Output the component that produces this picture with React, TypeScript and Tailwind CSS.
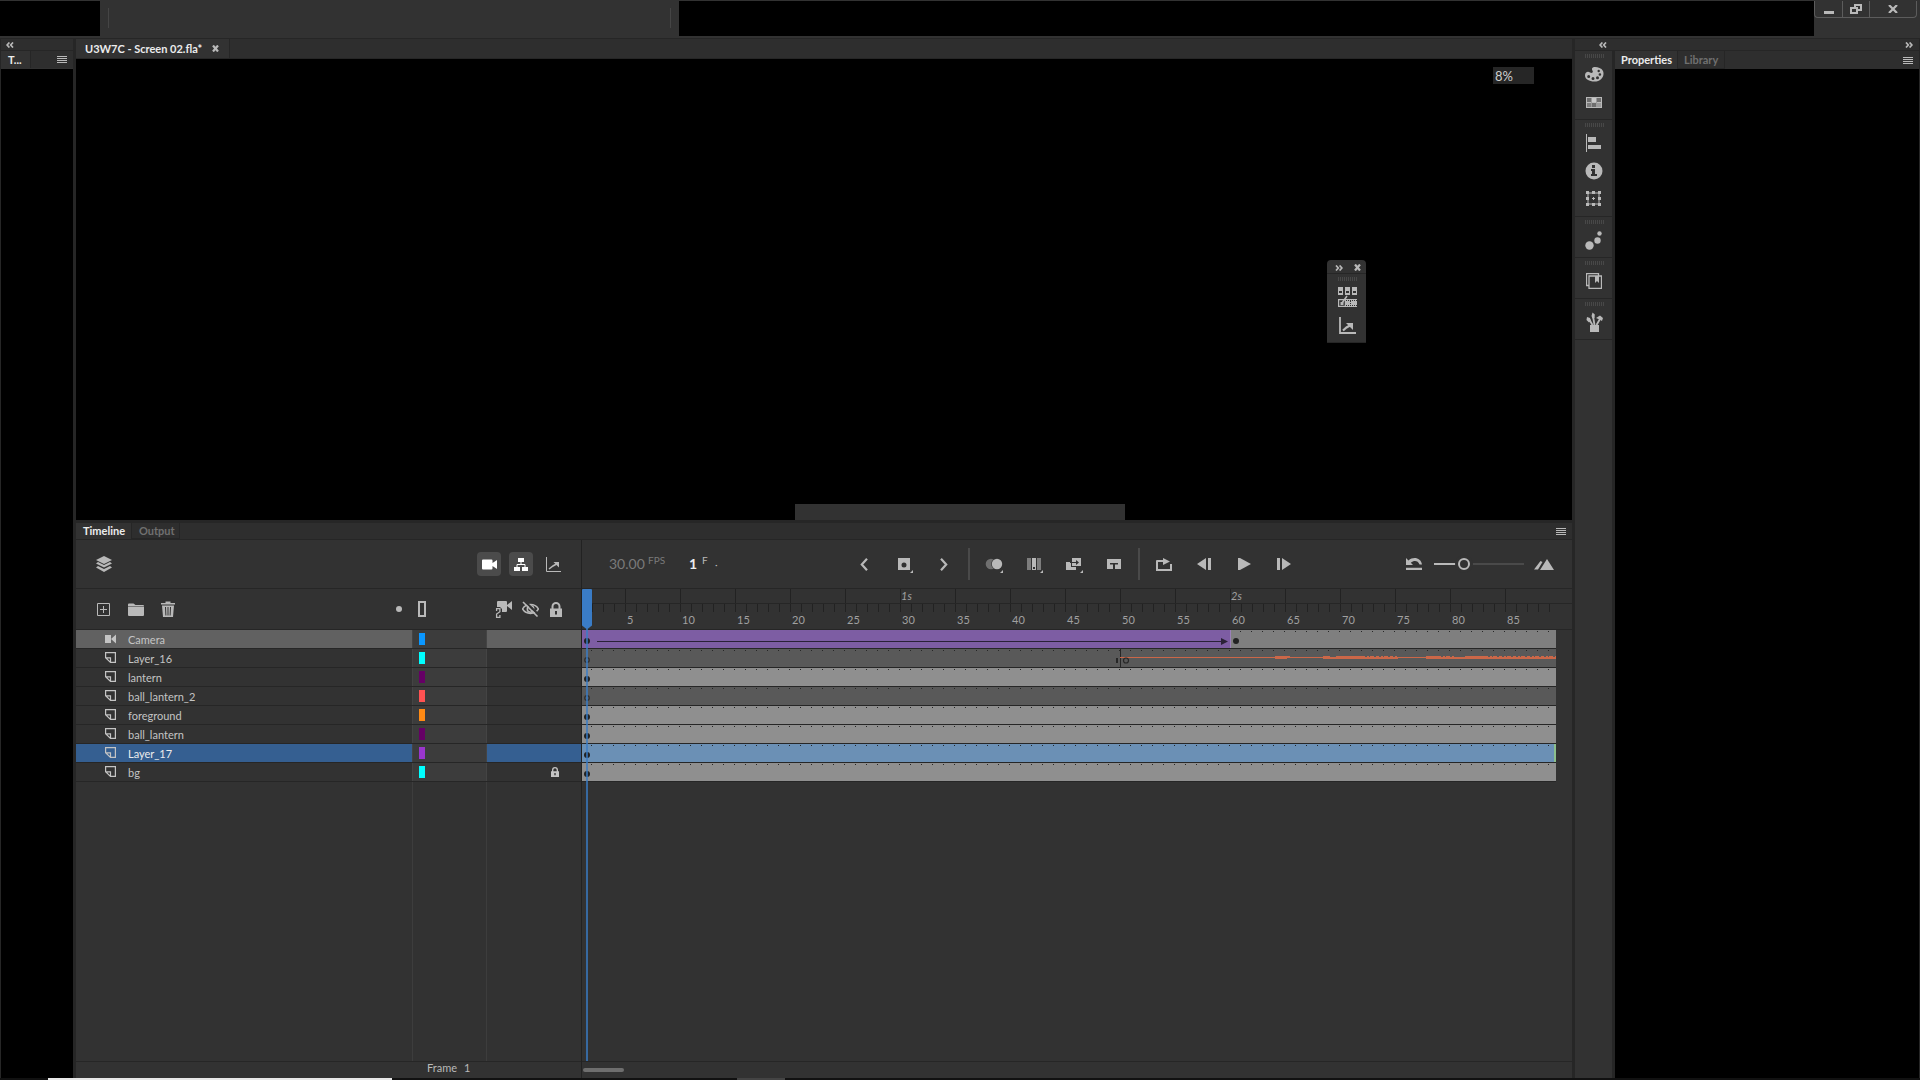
import type { ReactNode } from 'react'
import clsx from 'clsx'

type Layer = {
  name: string
  color: string
  kind: 'camera' | 'filled' | 'empty' | 'selected'
  locked?: boolean
  audio?: boolean
}

const LAYERS: Layer[] = [
  { name: 'Camera', color: 'bg-[#0a97ff]', kind: 'camera' },
  { name: 'Layer_16', color: 'bg-[#00ffff]', kind: 'empty', audio: true },
  { name: 'lantern', color: 'bg-[#650065]', kind: 'filled' },
  { name: 'ball_lantern_2', color: 'bg-[#ff5252]', kind: 'empty' },
  { name: 'foreground', color: 'bg-[#ff8a14]', kind: 'filled' },
  { name: 'ball_lantern', color: 'bg-[#650065]', kind: 'filled' },
  { name: 'Layer_17', color: 'bg-[#9a36cc]', kind: 'selected' },
  { name: 'bg', color: 'bg-[#00ffff]', kind: 'filled', locked: true },
]

const MARKS = Array.from({ length: 17 }, (_, i) => (i + 1) * 5)

// dot near the end of every 11px frame
const FRAME_DOTS =
  'bg-[linear-gradient(90deg,transparent_9px,#262626_9px_10px,transparent_10px)] bg-[length:11px_1px] bg-[position:0_1px] bg-repeat-x'

/* ---------- small shared pieces ---------- */

function IconButton({ label, className, children }: { label: string; className?: string; children: ReactNode }) {
  return (
    <button type="button" aria-label={label} className={clsx('grid shrink-0 place-items-center text-[#b9b9b9]', className)}>
      {children}
    </button>
  )
}

function Icon({ w, h, children }: { w: number; h: number; children: ReactNode }) {
  return (
    <svg width={w} height={h} viewBox={`0 0 ${w} ${h}`} fill="currentColor" aria-hidden="true">
      {children}
    </svg>
  )
}

function Chevrons({ right }: { right?: boolean }) {
  return (
    <Icon w={8} h={6}>
      <path
        d={right ? 'M1 0.5 3.3 3 1 5.5M4.6 0.5 6.9 3 4.6 5.5' : 'M3.4 0.5 1.1 3 3.4 5.5M7 0.5 4.7 3 7 5.5'}
        fill="none"
        stroke="currentColor"
        strokeWidth="1.7"
      />
    </Icon>
  )
}

function MenuIcon() {
  return (
    <Icon w={10} h={7}>
      <path d="M0 0h10v1H0zM0 2h10v1H0zM0 4h10v1H0zM0 6h10v1H0z" />
    </Icon>
  )
}

function CloseIcon() {
  return (
    <Icon w={7} h={7}>
      <path d="M1 0.5 6 6.5M6 0.5 1 6.5" stroke="currentColor" strokeWidth="2.2" />
    </Icon>
  )
}

function Tab({ active, className, children }: { active?: boolean; className?: string; children: ReactNode }) {
  return (
    <button
      type="button"
      role="tab"
      aria-selected={!!active}
      className={clsx(
        'h-full shrink-0 border-r border-[#262626] text-left text-[11px] leading-4 font-bold',
        active ? 'bg-[#323232] text-[#ececec]' : 'border-b text-[#707070]',
        className,
      )}
    >
      {children}
    </button>
  )
}

function Grip() {
  return (
    <div className="mx-auto mt-[3px] mb-0.5 h-1 w-[19px] bg-[repeating-linear-gradient(90deg,#484848_0_1px,transparent_1px_2px)]" />
  )
}

function DockGroup({ children }: { children: ReactNode }) {
  return (
    <div className="flex flex-col border-b border-[#262626] pb-[3px] pl-px">
      <Grip />
      {children}
    </div>
  )
}

function CameraIcon() {
  return (
    <Icon w={15} h={11}>
      <path d="M0 1.5Q0 0.5 1 0.5h8.5q1 0 1 1v2.6L15 0.9v9.2L10.500 6.9v2.600q0 1-1 1H1q-1 0-1-1z" />
    </Icon>
  )
}

function LayerIcon() {
  return (
    <Icon w={11} h={11}>
      <path d="M0.600 0.600h9.800v9.800H5.500L0.600 5.800zM0.600 5.800h4.900v4.600" fill="none" stroke="currentColor" strokeWidth="1.200" />
    </Icon>
  )
}

function GraphIcon() {
  return (
    <Icon w={15} h={15}>
      <path d="M0.500 0v14.500H15" fill="none" stroke="currentColor" />
      <path d="M3 12 7 9 10.500 7" fill="none" stroke="currentColor" strokeWidth="1.500" />
      <path d="M7.500 5H13v5.500z" />
    </Icon>
  )
}

function LockIcon({ small }: { small?: boolean }) {
  return (
    <svg width={small ? 8 : 12} height={small ? 10 : 15} viewBox="0 0 12 15" fill="currentColor" aria-hidden="true">
      <path fillRule="evenodd" d="M0 6.500h1.500V4.500a4.500 4.500 0 0 1 9 0v2H12V15H0zM3.500 6.500h5V4.500a2.500 2.500 0 0 0-5 0zM5 9h2v3.500H5z" />
    </svg>
  )
}

function Corner() {
  return <path d="M18 14v3h-3z" />
}

/* ---------- top bar ---------- */

function TopBar() {
  return (
    <header className="flex h-[38px] shrink-0 bg-[#323232] pt-px">
      <div className="h-[35px] w-[100px] bg-black" />
      <div className="flex h-[35px] w-[579px] justify-between px-2 pt-[7px]">
        <div className="h-5 w-px bg-[#454545]" />
        <div className="h-5 w-px bg-[#454545]" />
      </div>
      <div className="h-[35px] flex-1 bg-black" />
      <div className="w-[106px]">
        <div className="flex h-[17px] w-[103px] rounded-b-sm border border-t-0 border-[#5c5c5c]">
          <IconButton label="Minimize" className="w-7 border-r border-[#5c5c5c]">
            <Icon w={10} h={9}>
              <path d="M0 6h10v3H0z" />
            </Icon>
          </IconButton>
          <IconButton label="Restore" className="w-[27px] border-r border-[#5c5c5c]">
            <Icon w={12} h={10}>
              <path fillRule="evenodd" d="M4 0h8v7H8v3H0V3h4zM6 2v1h2v2h2V2zM2 5v3h4V5z" />
            </Icon>
          </IconButton>
          <IconButton label="Close" className="flex-1">
            <Icon w={10} h={8}>
              <path d="M1 0 9 8M9 0 1 8" stroke="currentColor" strokeWidth="2.200" />
            </Icon>
          </IconButton>
        </div>
      </div>
    </header>
  )
}

/* ---------- side panels ---------- */

function ToolsPanel() {
  return (
    <aside className="flex w-[73px] shrink-0 flex-col pl-px">
      <div className="flex h-[11px] items-center bg-[#2e2e2e] pl-[5px] text-[#b9b9b9]">
        <Chevrons />
      </div>
      <div className="mt-px flex h-[17px] items-stretch bg-[#2e2e2e]">
        <Tab active className="w-[30px] pl-[7px]">
          T...
        </Tab>
        <IconButton label="Tools menu" className="ml-auto w-[22px]">
          <MenuIcon />
        </IconButton>
      </div>
      <div className="flex-1 border-t border-[#323232] bg-black" />
    </aside>
  )
}

function Dock() {
  return (
    <nav aria-label="Panels" className="w-[37px] shrink-0 bg-[#323232]">
      <DockGroup>
        <IconButton label="Color" className="h-7">
          <Icon w={19} h={15}>
            <path
              fillRule="evenodd"
              d="M8 0.500c1.500-1 8-0.500 10 3.500 2 5-2 10.500-8.500 10.500C4 14.500 0 12 0 8.500 0 5 3 4 5 5.500c2 1 3.500 0 2.500-1.800C6.500 2 7 1 8 0.500zM2.200 9.500a1.500 1.500 0 1 0 3 0a1.500 1.500 0 1 0-3 0M6.500 11.500a1.500 1.500 0 1 0 3 0a1.500 1.500 0 1 0-3 0M11 10.700a1.500 1.500 0 1 0 3 0a1.500 1.500 0 1 0-3 0M13.600 7.500a1.300 1.300 0 1 0 2.600 0a1.300 1.300 0 1 0-2.600 0M12.500 4a1.200 1.200 0 1 0 2.400 0a1.200 1.200 0 1 0-2.400 0"
            />
          </Icon>
        </IconButton>
        <IconButton label="Swatches" className="h-7">
          <Icon w={16} h={11}>
            <path d="M0 0h16v11H0z" />
            <path d="M1 1h4v4H1zM11 1h4v4h-4zM6 6h4v4H6z" fill="#6e6e6e" />
            <path d="M1 6h4v4H1z" fill="#7d7d7d" />
            <path d="M11 6h4v4h-4z" fill="#9a9a9a" />
            <path d="M6 1h4v4H6z" fill="#c8c8c8" />
            <path d="M5 1h1v9H5zM10 1h1v9h-1z" fill="#9a9a9a" />
          </Icon>
        </IconButton>
      </DockGroup>
      <DockGroup>
        <IconButton label="Align" className="h-7">
          <Icon w={16} h={18}>
            <path d="M0 0h1v18H0zM2 3h8v5H2zM2 11h13v4H2z" />
          </Icon>
        </IconButton>
        <IconButton label="Info" className="h-7">
          <Icon w={18} h={18}>
            <circle cx="9" cy="9" r="8.500" />
            <path d="M7 3h3v3H7zM6 7h4v5h2v2H6v-2h1V9H6z" fill="#323232" />
          </Icon>
        </IconButton>
        <IconButton label="Transform" className="h-7">
          <Icon w={16} h={16}>
            <path d="M2 2h11v11H2z" fill="none" stroke="currentColor" />
            <path d="M0 0h3v3H0zM6 0h3v3H6zM12 0h3v3h-3zM0 6h3v3H0zM12 6h3v3h-3zM0 12h3v3H0zM6 12h3v3H6zM12 12h3v3h-3zM7 6h1v3H7zM6 7h3v1H6z" />
          </Icon>
        </IconButton>
      </DockGroup>
      <DockGroup>
        <IconButton label="Brush library" className="h-7">
          <Icon w={18} h={19}>
            <circle cx="4.500" cy="14.500" r="4.200" />
            <circle cx="12.500" cy="9.500" r="3.200" />
            <circle cx="14.500" cy="2.500" r="2.200" />
          </Icon>
        </IconButton>
      </DockGroup>
      <DockGroup>
        <IconButton label="Components" className="h-7">
          <Icon w={16} h={16}>
            <path d="M3 12.500H0.500v-12h12V3M3 3h12.500v12.500H3z" fill="none" stroke="currentColor" strokeWidth="1.300" />
            <path d="M9 3h4v7L11 8l-2 2z" />
          </Icon>
        </IconButton>
      </DockGroup>
      <DockGroup>
        <IconButton label="Assets" className="h-7">
          <Icon w={17} h={20}>
            <path d="M4 13h9v7H4z" />
            <path d="M6.500 13 3 7M8.500 13 7 4M10.500 13 14 7" stroke="currentColor" strokeWidth="1.800" />
            <path d="M5.500 4 6.500 0.500 8.800 2.500 8.500 6 6.500 6.500zM1 5l3 1 1 3-2 1.500L0.500 8zM10 6l4-2.500 3 2.500-1 3L13.500 7.500z" />
          </Icon>
        </IconButton>
      </DockGroup>
    </nav>
  )
}

function RightSide() {
  return (
    <aside className="flex w-[345px] shrink-0 flex-col pr-px">
      <div className="mb-px flex h-[11px] items-center justify-between bg-[#2e2e2e] pr-1.5 pl-6 text-[#b9b9b9]">
        <Chevrons />
        <Chevrons right />
      </div>
      <div className="flex flex-1">
        <Dock />
        <section className="flex flex-1 flex-col pl-[3px]">
          <div role="tablist" className="flex h-[18px] items-stretch bg-[#2e2e2e]">
            <Tab active className="w-[63px] pl-1.5">
              Properties
            </Tab>
            <Tab className="w-[47px] pl-1.5">Library</Tab>
            <IconButton label="Properties menu" className="ml-auto w-[22px]">
              <MenuIcon />
            </IconButton>
          </div>
          <div className="flex-1 bg-black" />
        </section>
      </div>
    </aside>
  )
}

/* ---------- stage ---------- */

function FloatingPanel() {
  return (
    <div className="absolute top-[201px] right-[206px] w-[39px] rounded-t-sm bg-[#323232]">
      <div className="flex h-[14px] items-center justify-between border-b border-[#262626] pt-0.5 pr-[5px] pl-2 text-[#b9b9b9]">
        <Chevrons right />
        <CloseIcon />
      </div>
      <DockGroup>
        <IconButton label="Frame picker" className="h-7">
          <Icon w={20} h={20}>
            <path fillRule="evenodd" d="M1 0h5v8H1zM8 0h5v8H8zM15 0h5v8h-5zM2 4h3v2H2zM9 4h3v2H9zM16 4h3v2h-3z" />
            <path d="M1.600 12.600h6.800v6.800H1.600z" fill="none" stroke="currentColor" strokeWidth="1.200" />
            <path d="M8 12h12v8H8z" />
            <path d="M9 13.500h11M9 18.500h11" stroke="#323232" strokeDasharray="1 1" />
            <path d="M13.500 14v4" stroke="#323232" strokeDasharray="1 1" />
            <path d="M5 16 10 9" stroke="currentColor" strokeWidth="1.500" />
            <path d="M3.500 15h3v3h-3z" />
          </Icon>
        </IconButton>
        <IconButton label="Motion editor" className="h-7">
          <Icon w={18} h={17}>
            <path d="M2 0v16h16" fill="none" stroke="currentColor" strokeWidth="1.800" />
            <path d="M5 13.500 8.500 10.500 12 8.500" fill="none" stroke="currentColor" strokeWidth="2.200" />
            <path d="M8 6h7v7z" />
          </Icon>
        </IconButton>
      </DockGroup>
    </div>
  )
}

function Stage() {
  return (
    <section className="relative flex flex-1 justify-end bg-black pt-2">
      <input
        aria-label="Zoom"
        defaultValue="8%"
        className="mr-[38px] h-[17px] w-[41px] bg-[#262626] px-0.5 text-[13px] leading-4 text-[#cfcfcf] outline-none"
      />
      <FloatingPanel />
      <div className="absolute bottom-0 left-[719px] h-4 w-[330px] bg-[#323232]" />
    </section>
  )
}

/* ---------- timeline ---------- */

function SmallCamera() {
  return (
    <Icon w={11} h={10}>
      <path d="M0 1h6v8H0zM6 5l5-4.500v9z" />
    </Icon>
  )
}

function LayerRow({ layer }: { layer: Layer }) {
  const bg = clsx(
    layer.kind === 'camera' && 'bg-[#616161]',
    layer.kind === 'selected' && 'bg-[#355f91]',
  )
  return (
    <div className="flex h-[19px] border-b border-[#262626] text-[#c4c4c4]">
      <div className={clsx('flex w-[336px] items-center pl-[29px]', bg)}>
        <span className="flex w-[23px] pb-px">{layer.kind === 'camera' ? <SmallCamera /> : <LayerIcon />}</span>
        <span className={clsx('pt-0.5 text-[11px] leading-4', layer.kind === 'selected' && 'text-[#ececec]')}>{layer.name}</span>
      </div>
      <div className="flex w-[75px] items-center border-x border-[#444] bg-[#3c3c3c] pl-1.5">
        <div className={clsx('h-3 w-1.5', layer.color)} />
      </div>
      <div className={clsx('flex flex-1 items-center justify-end pr-[22px]', bg)}>
        {layer.locked && <LockIcon small />}
      </div>
    </div>
  )
}

function AudioWave() {
  return (
    <g fill="#cb6748">
      <path d="M538 8h436v1H538z" />
      <path d="M693 7h12v3h-12zM705 7h3v2h-3zM741 7h7v3h-7zM754 7h26v3h-26zM844 7h12v3h-12zM883 7h20v3h-20z" />
      <path d="M748 8h6v2h-6zM856 8h27v2h-27zM780 8h36v2h-36zM903 8h71v2h-71z" />
      <path d="M780 7.500h36M856 7.500h16M903 7.500h71" stroke="#cb6748" strokeDasharray="3 2 2 1 4 2" />
    </g>
  )
}

function FrameRow({ layer }: { layer: Layer }) {
  const camera = layer.kind === 'camera'
  return (
    <div className="relative mr-4 flex h-[19px] border-b border-[#262626]">
      {camera && <div className="w-[649px] border-r border-[#9a80b8] bg-[#7d5da3]" />}
      <div
        className={clsx(
          'flex-1',
          FRAME_DOTS,
          camera && 'bg-[#7f7f7f]',
          layer.kind === 'filled' && 'bg-[#8f8f8f]',
          layer.kind === 'empty' && 'bg-[#595959]',
          layer.kind === 'selected' && 'border-r-2 border-[#8cbf8c] bg-[#6b90b5]',
        )}
      />
      <svg className="absolute inset-0 h-[18px] w-full" aria-hidden="true">
        {layer.kind === 'empty' ? (
          <circle cx="5" cy="11" r="2.300" fill="none" stroke="#303030" strokeWidth="1.200" />
        ) : (
          <circle cx="5" cy="11" r="3" fill="#222" />
        )}
        {camera && (
          <>
            <path d="M15 11h628v1H15z" fill="#2a2138" />
            <path d="M639 8 646 11.500 639 15z" fill="#2a2138" />
            <circle cx="654" cy="11" r="3" fill="#222" />
          </>
        )}
        {layer.audio && (
          <>
            <path d="M534 9h2v5h-2zM538 0h1v18h-1z" fill="#262626" />
            <AudioWave />
            <circle cx="544" cy="11.500" r="2.500" fill="none" stroke="#262626" strokeWidth="1.200" />
          </>
        )}
      </svg>
    </div>
  )
}

function Ruler() {
  return (
    <div className="h-[41px] overflow-hidden border-b border-[#262626] text-[#a0a0a0]">
      <div className="h-[15px] border-b border-[#262626] pr-4">
        <div className="flex h-full overflow-hidden bg-[linear-gradient(90deg,transparent_43px,#222_43px_44px,transparent_44px)] bg-[length:55px_15px] bg-repeat-x pl-[44px]">
          {MARKS.map((n) => (
            <span key={n} className="w-[55px] shrink-0 text-[11px] leading-[14px] italic">
              {n % 30 === 0 ? `${n / 30}s` : ''}
            </span>
          ))}
        </div>
      </div>
      <div className="mr-4 flex h-[25px] bg-[linear-gradient(90deg,transparent_10px,#222_10px_11px,transparent_11px)] bg-[length:11px_8px] bg-repeat-x pt-2 pl-[44px]">
        {MARKS.map((n) => (
          <span key={n} className="w-[55px] shrink-0 pl-px text-[11px] leading-4">
            {n}
          </span>
        ))}
      </div>
    </div>
  )
}

function Playback() {
  return (
    <div className="flex h-[49px] items-center border-b border-[#262626]">
      <div className="flex w-[262px] items-start pl-[27px]">
        <span className="w-[39px] text-sm leading-4 text-[#7a7a7a]">30.00</span>
        <span className="w-[41px] text-[10px] leading-2 text-[#7a7a7a]">FPS</span>
        <span className="w-[13px] text-sm leading-4 font-bold text-[#ececec]">1</span>
        <span className="w-[13px] text-[10px] leading-2 text-[#b9b9b9]">F</span>
        <span className="text-[10px] leading-4 text-[#b9b9b9]">·</span>
      </div>
      <IconButton label="Previous keyframe" className="h-8 w-10">
        <Icon w={8} h={13}>
          <path d="M7 0.800 1.800 6.500 7 12.200" fill="none" stroke="currentColor" strokeWidth="2.200" />
        </Icon>
      </IconButton>
      <IconButton label="Insert keyframe" className="h-8 w-10">
        <Icon w={18} h={17}>
          <path fillRule="evenodd" d="M3 2h12v12H3zM6.500 9a2.500 2.500 0 1 0 5 0a2.500 2.500 0 1 0-5 0" />
          <Corner />
        </Icon>
      </IconButton>
      <IconButton label="Next keyframe" className="h-8 w-10">
        <Icon w={8} h={13}>
          <path d="M1 0.800 6.200 6.500 1 12.200" fill="none" stroke="currentColor" strokeWidth="2.200" />
        </Icon>
      </IconButton>
      <div className="mx-1 h-8 w-0.5 bg-[#4a4a4a]" />
      <IconButton label="Onion skin" className="h-8 w-10">
        <Icon w={18} h={17}>
          <circle cx="6" cy="8" r="5.300" fill="#6f6f6f" />
          <circle cx="12" cy="8" r="5.800" fill="#323232" />
          <circle cx="12" cy="8" r="5.200" />
          <Corner />
        </Icon>
      </IconButton>
      <IconButton label="Edit multiple frames" className="h-8 w-10">
        <Icon w={18} h={17}>
          <path d="M2 2h4v12H2zM12 2h4v12h-4z" fill="#7d7d7d" />
          <path fillRule="evenodd" d="M7 2h4v12H7zM8 11h2v2H8z" />
          <Corner />
        </Icon>
      </IconButton>
      <IconButton label="Create tween" className="h-8 w-10">
        <Icon w={18} h={17}>
          <path d="M1 6h5v5h5v3H1z" />
          <path d="M7 2h9v8H7z" />
          <path d="M5 6h6V4l3 2.500L11 9V7H5z" fill="#323232" />
          <Corner />
        </Icon>
      </IconButton>
      <IconButton label="Insert text frame" className="h-8 w-10">
        <Icon w={14} h={10}>
          <path fillRule="evenodd" d="M0 0h14v10H8V5.500h3V4H3v1.500h3V10H0z" />
        </Icon>
      </IconButton>
      <div className="mx-1 h-8 w-0.5 bg-[#4a4a4a]" />
      <IconButton label="Loop" className="h-8 w-10">
        <Icon w={16} h={13}>
          <path d="M1 6v6h14V6" fill="none" stroke="currentColor" strokeWidth="2" />
          <path d="M0 7V3q0-1 1-1h6V0l7 3.500L7 7V4H2v3z" />
        </Icon>
      </IconButton>
      <IconButton label="Step back" className="h-8 w-10">
        <Icon w={14} h={12}>
          <path d="M9 0v12L0 6zM11 0h3v12h-3z" />
        </Icon>
      </IconButton>
      <IconButton label="Play" className="h-8 w-10">
        <Icon w={13} h={12}>
          <path d="M0 0h2l11 6L2 12H0z" />
        </Icon>
      </IconButton>
      <IconButton label="Step forward" className="h-8 w-10">
        <Icon w={14} h={12}>
          <path d="M0 0h3v12H0zM5 0l9 6-9 6z" />
        </Icon>
      </IconButton>
      <div className="ml-auto flex items-center pr-2">
        <IconButton label="Reset timeline zoom" className="h-8 w-10">
          <Icon w={16} h={12}>
            <path d="M0 9.800h16V12H0zM0 0v7h7L4.800 4.800C8 2 12 2.500 13.500 6.500H16C15 0 7.500-2 2.500 2.500z" />
          </Icon>
        </IconButton>
        <input
          type="range"
          aria-label="Timeline zoom"
          defaultValue={31}
          className="h-0.5 w-[90px] appearance-none bg-[linear-gradient(90deg,#b9b9b9_30px,#4a4a4a_30px)] [&::-webkit-slider-thumb]:size-3 [&::-webkit-slider-thumb]:appearance-none [&::-webkit-slider-thumb]:rounded-full [&::-webkit-slider-thumb]:border-2 [&::-webkit-slider-thumb]:border-[#b9b9b9] [&::-webkit-slider-thumb]:bg-[#323232] [&::-webkit-slider-thumb]:shadow-[0_0_0_3px_#323232]"
        />
        <IconButton label="Fit frames" className="h-8 w-10">
          <Icon w={20} h={11}>
            <path d="M6 11 13 0l7 11zM0 10.500 6.500 2 8.500 3 4 10.500z" />
          </Icon>
        </IconButton>
      </div>
    </div>
  )
}

function LayerTools() {
  return (
    <>
      <div className="flex h-[49px] items-center border-b border-[#262626]">
        <IconButton label="Layer depth" className="ml-4 size-6">
          <Icon w={16} h={16}>
            <path d="M8 0l8 4-8 4-8-4zM2 6l6 3 6-3 2 1.500-8 4-8-4zM2 10l6 3 6-3 2 1.500L8 16l-8-4.500z" />
          </Icon>
        </IconButton>
        <IconButton label="Camera" className="ml-auto size-6 rounded bg-[#4b4b4b] text-white">
          <CameraIcon />
        </IconButton>
        <IconButton label="Parenting view" className="ml-2 size-6 rounded bg-[#4b4b4b] text-white">
          <Icon w={14} h={13}>
            <path d="M4 0h6v4H4zM0 9h6v4H0zM8 9h6v4H8z" />
            <path d="M7 4v2.500M3 9V6.500h8V9" fill="none" stroke="currentColor" />
          </Icon>
        </IconButton>
        <IconButton label="Graph" className="mr-4 ml-2 size-6">
          <GraphIcon />
        </IconButton>
      </div>
      <div className="flex h-[41px] items-center border-b border-[#262626]">
        <IconButton label="New layer" className="ml-[11px] w-8">
          <Icon w={13} h={13}>
            <path d="M0.500 0.500h12v12H0.500z" fill="none" stroke="currentColor" />
            <path d="M6 3h1v7H6zM3 6h7v1H3z" />
          </Icon>
        </IconButton>
        <IconButton label="New folder" className="ml-px w-8">
          <Icon w={16} h={13}>
            <path d="M0 1.500Q0 0.500 1 0.500h4.500l2 1.500H15q1 0 1 1v0.500H0zM0 4h16v8q0 1-1 1H1q-1 0-1-1z" />
          </Icon>
        </IconButton>
        <IconButton label="Delete" className="w-8">
          <Icon w={14} h={16}>
            <path fillRule="evenodd" d="M0 2h4.500V0.500h5V2H14v1.500H0zM1 4.500h12L12 16H2zM4 6l0.400 8.500h1L5 6zM6.500 6v8.500h1V6zM9 6l-0.400 8.500h1L10 6z" />
          </Icon>
        </IconButton>
        <IconButton label="Highlight layers" className="ml-[203px] w-6">
          <Icon w={6} h={6}>
            <circle cx="3" cy="3" r="3" />
          </Icon>
        </IconButton>
        <IconButton label="Show outlines" className="w-[22px]">
          <Icon w={8} h={16}>
            <path d="M1 1h6v14H1z" fill="none" stroke="currentColor" strokeWidth="2" />
          </Icon>
        </IconButton>
        <IconButton label="Attach to camera" className="ml-auto w-[26px]">
          <Icon w={18} h={17}>
            <path d="M2 1q0-1 1-1h8q1 0 1 1v3l5-4v9l-5-4v5q0 1-1 1H7V8L5 6H2z" />
            <path d="M1.600 10V7.700h3.300v3L1.600 13v3.300h3.300V14" fill="none" stroke="currentColor" strokeWidth="1.300" />
          </Icon>
        </IconButton>
        <IconButton label="Hide layers" className="w-[26px]">
          <Icon w={17} h={16}>
            <path d="M0.500 8C4 2 13 2 16.500 8 13 14 4 14 0.500 8z" fill="none" stroke="currentColor" strokeWidth="1.500" />
            <circle cx="8.500" cy="8" r="3.200" fill="none" stroke="currentColor" strokeWidth="1.500" />
            <path d="M2.500 0 17 14" stroke="#323232" strokeWidth="2" />
            <path d="M1 1 15.500 15.500" stroke="currentColor" strokeWidth="1.600" />
          </Icon>
        </IconButton>
        <IconButton label="Lock layers" className="mr-3 w-[26px]">
          <LockIcon />
        </IconButton>
      </div>
    </>
  )
}

function Timeline() {
  return (
    <section className="flex h-[555px] shrink-0 flex-col bg-[#323232]">
      <div role="tablist" className="flex h-[17px] shrink-0 border-b border-[#262626] bg-[#2e2e2e]">
        <Tab active className="w-14 pl-[7px]">
          Timeline
        </Tab>
        <Tab className="w-12 pl-[7px]">Output</Tab>
        <IconButton label="Timeline menu" className="ml-auto w-[22px]">
          <MenuIcon />
        </IconButton>
      </div>
      <div className="flex flex-1">
        <div className="flex w-[506px] shrink-0 flex-col border-r border-[#222]">
          <LayerTools />
          {LAYERS.map((layer) => (
            <LayerRow key={layer.name} layer={layer} />
          ))}
          <div className="flex flex-1">
            <div className="w-[336px]" />
            <div className="w-[75px] border-x border-[#3d3d3d]" />
          </div>
          <div className="flex h-[17px] gap-[7px] border-t border-[#262626] pl-[351px] text-[11px] leading-3 text-[#b9b9b9]">
            <span>Frame</span>
            <span>1</span>
          </div>
        </div>
        <div className="flex min-w-0 flex-1 flex-col">
          <Playback />
          <div className="relative flex flex-1 flex-col">
            <Ruler />
            {LAYERS.map((layer) => (
              <FrameRow key={layer.name} layer={layer} />
            ))}
            {/* playhead */}
            <div className="absolute inset-y-0 left-0 flex w-2.5 flex-col items-center">
              <svg width="10" height="40" viewBox="0 0 10 40" aria-hidden="true">
                <path d="M0 1Q0 0 1 0h8q1 0 1 1v35.500L5.500 40h-1L0 36.500z" fill="#3a7cc6" />
              </svg>
              <div className="w-0.5 flex-1 bg-[#3a7cc6]/75" />
            </div>
          </div>
          <div className="h-[17px] border-t border-[#262626] pt-1.5">
            <div className="ml-px h-1 w-[41px] rounded-full bg-[#6e6e6e]" />
          </div>
        </div>
      </div>
    </section>
  )
}

export default function App() {
  return (
    <div className="flex h-screen min-h-[700px] flex-col overflow-hidden bg-[#262626] font-['Lato',sans-serif]">
      <TopBar />
      <div className="flex flex-1 pt-px">
        <ToolsPanel />
        <main className="mx-[3px] flex min-w-0 flex-1 flex-col">
          <div className="flex h-5 shrink-0 border-b border-[#262626] bg-[#2e2e2e]">
            <div className="flex w-[154px] items-center border-r border-[#262626] bg-[#323232] pl-[9px] text-[#ececec]">
              <span className="text-[11px] leading-4 font-bold whitespace-nowrap">U3W7C - Screen 02.fla*</span>
              <IconButton label="Close document" className="mr-2.5 ml-auto">
                <CloseIcon />
              </IconButton>
            </div>
          </div>
          <Stage />
          <div className="h-[3px] shrink-0" />
          <Timeline />
        </main>
        <RightSide />
      </div>
      <footer className="flex h-0.5 shrink-0 bg-[#111] pl-12">
        <div className="w-[344px] bg-[#e8e8e8]" />
        <div className="ml-[345px] w-12 bg-[#444]" />
      </footer>
    </div>
  )
}
